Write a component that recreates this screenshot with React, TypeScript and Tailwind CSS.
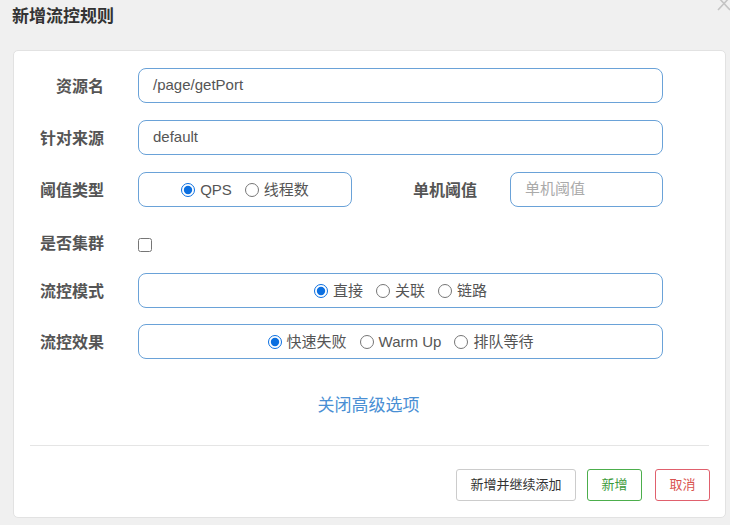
import React from "react";

const font = { fontFamily: '"Liberation Sans", "Noto Sans CJK SC", sans-serif' };

const Radio = ({ name, label, checked }: { name: string; label: string; checked?: boolean }) => (
    <label className="flex items-center gap-[5px]">
        <input
            type="radio"
            name={name}
            defaultChecked={checked}
            className="m-0 h-[14px] w-[14px] accent-[#0b6fe0]"
        />
        <span className="pt-[2px]">{label}</span>
    </label>
);

const Label = ({ children }: { children: React.ReactNode }) => (
    <div className="w-[124px] shrink-0 pr-[34px] pt-[3px] text-right text-[16px] font-bold text-[#555]">
        {children}
    </div>
);

const boxCls =
    "flex h-[35px] items-center rounded-[8px] border border-[#6aa2d8] bg-white px-[14px] text-[15px] text-[#555]";

export default function App() {
    return (
        <div className="relative h-[525px] w-[730px] overflow-hidden bg-[#f0f0f0]" style={font}>
            <svg className="absolute right-0 top-0" width="14" height="12" viewBox="0 0 14 12">
                <path d="M2 -3 L14 10 M14 -3 L2 10" stroke="#c4c4c4" strokeWidth="1.6" fill="none" />
            </svg>

            <h1 className="pl-[12px] pt-[7px] text-[17px] font-bold leading-[20px] text-[#333]">新增流控规则</h1>

            <div className="ml-[13px] mt-[23px] h-[468px] w-[713px] rounded-[5px] border border-[#e2e2e2] bg-white">
                <div className="flex flex-col pt-[17px]">
                    <div className="flex items-center">
                        <Label>资源名</Label>
                        <div className={`${boxCls} w-[525px]`}>/page/getPort</div>
                    </div>

                    <div className="mt-[17px] flex items-center">
                        <Label>针对来源</Label>
                        <div className={`${boxCls} w-[525px]`}>default</div>
                    </div>

                    <div className="mt-[17px] flex items-center">
                        <Label>阈值类型</Label>
                        <div className={`${boxCls} w-[214px] justify-center gap-[13px]`}>
                            <Radio name="grade" label="QPS" checked />
                            <Radio name="grade" label="线程数" />
                        </div>
                        <div className="w-[158px] shrink-0 pr-[33px] pt-[3px] text-right text-[16px] font-bold text-[#555]">
                            单机阈值
                        </div>
                        <div className={`${boxCls} w-[153px] text-[#aaa]`}>单机阈值</div>
                    </div>

                    <div className="mt-[19px] flex h-[32px] items-center">
                        <Label>是否集群</Label>
                        <input type="checkbox" className="m-0 mt-[6px] h-[14px] w-[14px]" />
                    </div>

                    <div className="mt-[15px] flex items-center">
                        <Label>流控模式</Label>
                        <div className={`${boxCls} w-[525px] justify-center gap-[13px]`}>
                            <Radio name="strategy" label="直接" checked />
                            <Radio name="strategy" label="关联" />
                            <Radio name="strategy" label="链路" />
                        </div>
                    </div>

                    <div className="mt-[16px] flex items-center">
                        <Label>流控效果</Label>
                        <div className={`${boxCls} w-[525px] justify-center gap-[13px]`}>
                            <Radio name="behavior" label="快速失败" checked />
                            <Radio name="behavior" label="Warm Up" />
                            <Radio name="behavior" label="排队等待" />
                        </div>
                    </div>
                </div>

                <div className="mt-[36px] text-center text-[17px] leading-[22px] text-[#4a8fd4]">
                    <span className="ml-[-2px]">关闭高级选项</span>
                </div>

                <div className="mx-[16px] mt-[28px] h-px bg-[#e5e5e5]" />

                <div className="flex justify-end gap-[11px] pr-[15px] pt-[23px] text-[13px]">
                    <button className="h-[32px] w-[120px] rounded-[3px] border border-[#ccc] bg-white text-[#333]">
                        新增并继续添加
                    </button>
                    <button className="h-[32px] w-[55px] rounded-[3px] border border-[#4cae4c] bg-white text-[#3c9a3c]">
                        新增
                    </button>
                    <button className="ml-[2px] h-[32px] w-[55px] rounded-[3px] border border-[#e0606d] bg-white text-[#d9534f]">
                        取消
                    </button>
                </div>
            </div>
        </div>
    );
}
